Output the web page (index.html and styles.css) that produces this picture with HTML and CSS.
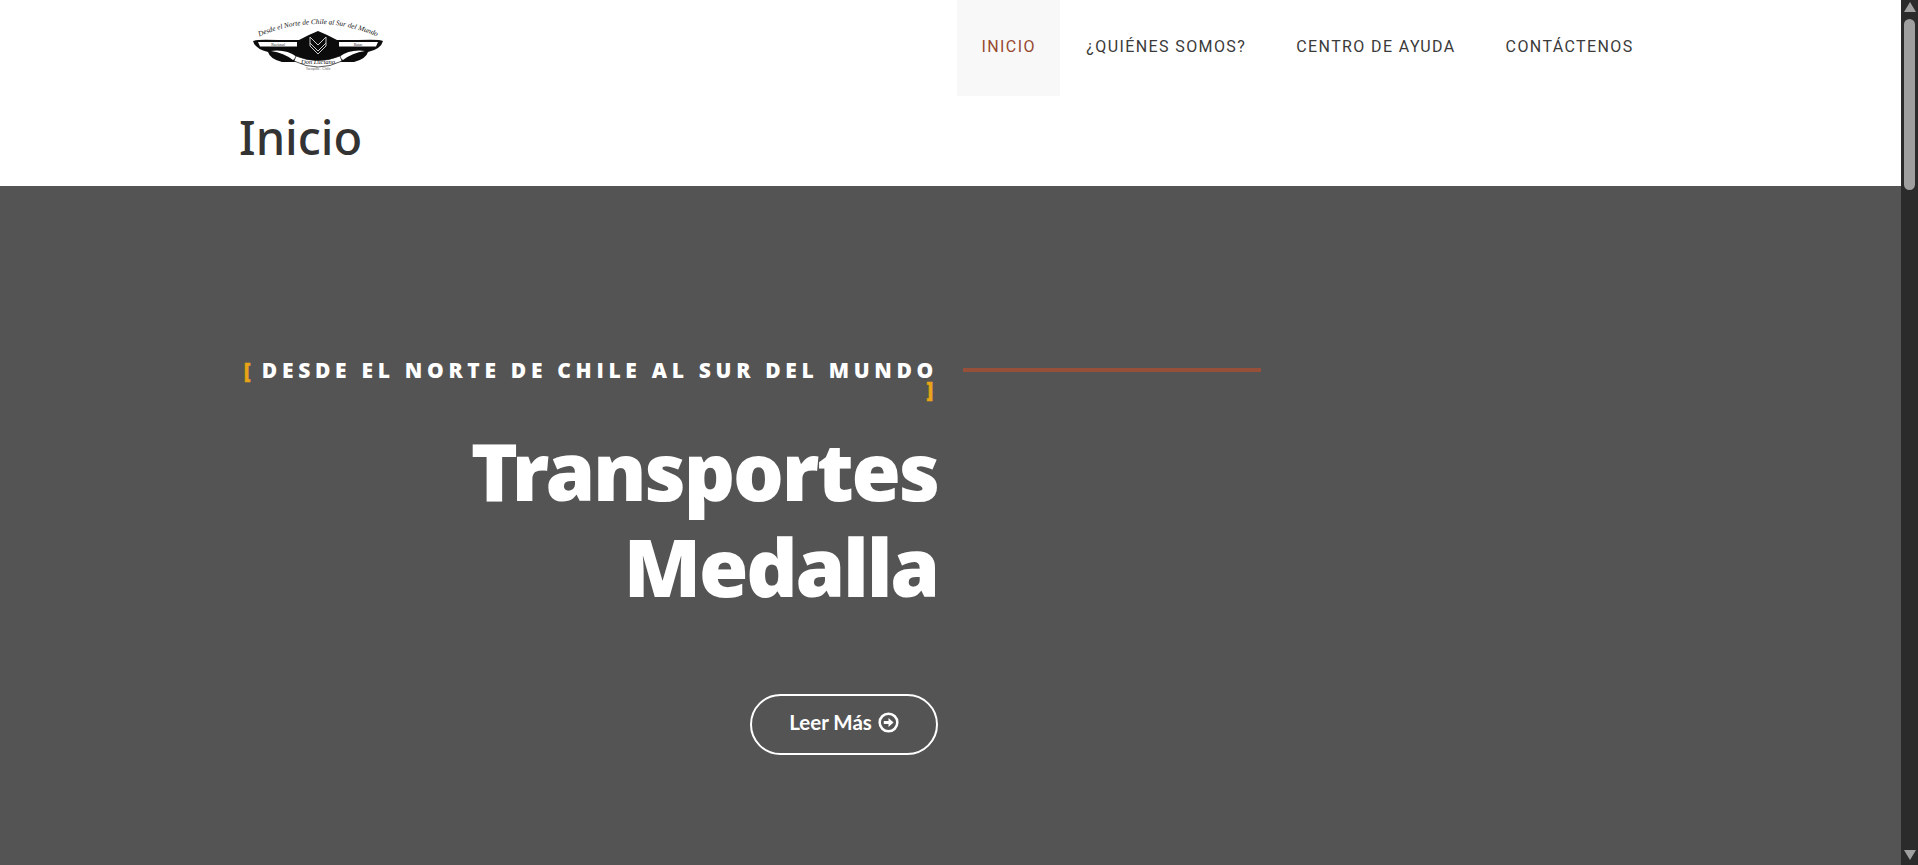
FILE: index.html
```html
<!DOCTYPE html>
<html lang="es">
<head>
<meta charset="utf-8">
<title>Inicio</title>
<link rel="stylesheet" href="styles.css">
</head>
<body>
<div class="page">
  <header class="header">
    <div class="topbar">
      <a class="logo" href="#" aria-label="Transportes Medalla">
        <svg width="136" height="60" viewBox="0 0 136 60">
          <defs><path id="arc" d="M8 22 Q68 -4 128 22"/></defs>
          <text class="logo-script"><textPath href="#arc" startOffset="50%" text-anchor="middle">Desde el Norte de Chile al Sur del Mundo</textPath></text>
          <path d="M3 26 Q6 24 28 25 L49 25 Q58 20 68 16 Q78 20 87 25 L108 25 Q130 24 133 26 Q131 34 118 37 Q116 44 104 47 L88 47 Q78 51 68 51 Q58 51 48 47 L32 47 Q20 44 18 37 Q5 34 3 26Z" fill="#0c0c0c"/>
          <path d="M8 27 H47 V31.5 H10Z M89 27 H128 L126 31.5 H89Z" fill="#fff"/>
          <path d="M21 36 Q36 34 47 42 L43 45 Q34 38 21 36Z M115 36 Q100 34 89 42 L93 45 Q102 38 115 36Z" fill="#fff"/>
          <path d="M46 41 Q68 50 90 41 L92 46 Q80 52 68 52 Q56 52 44 46Z" fill="#fff" stroke="#111" stroke-width=".7"/>
          <path d="M60 22 L68 30 L76 22 V31 L68 39 L60 31Z M60 28 L68 36 L76 28" fill="none" stroke="#ccc" stroke-width="1"/>
          <text class="logo-label" x="28" y="31" text-anchor="middle">Nacional</text>
          <text class="logo-label" x="108" y="31" text-anchor="middle">Rutas</text>
          <text class="logo-name" x="68" y="49" text-anchor="middle">Don Luciano</text>
          <text class="logo-small" x="68" y="55" text-anchor="middle">Tocopilla - Chile</text>
        </svg>
      </a>
      <nav class="nav">
        <a class="nav-item active" href="#">INICIO</a>
        <a class="nav-item" href="#">¿QUIÉNES SOMOS?</a>
        <a class="nav-item" href="#">CENTRO DE AYUDA</a>
        <a class="nav-item" href="#">CONTÁCTENOS</a>
      </nav>
    </div>
    <h2 class="page-title">Inicio</h2>
  </header>
  <main class="hero">
    <div class="hero-col">
      <p class="eyebrow"><span class="bracket bracket-open">[</span> DESDE EL NORTE DE CHILE AL SUR DEL MUNDO <span class="bracket">]</span></p>
      <h1 class="hero-title">Transportes Medalla</h1>
      <a class="btn" href="#">Leer Más
        <svg class="btn-icon" width="21" height="21" viewBox="0 0 20 20"><circle cx="10" cy="10" r="8.4" fill="none" stroke="#fff" stroke-width="2.4"/><path d="M5.5 8.6H10V5.6L14.8 10 10 14.4V11.4H5.5Z" fill="#fff"/></svg>
      </a>
    </div>
    <div class="hero-rule"></div>
  </main>
</div>
<aside class="scrollbar" aria-hidden="true">
  <span class="sb-up"></span>
  <span class="sb-thumb"></span>
  <span class="sb-down"></span>
</aside>
</body>
</html>
```
FILE: styles.css
```css
* { box-sizing: border-box; }
html, body { margin: 0; height: 865px; overflow: hidden; }
body { display: flex; font-family: "Noto Sans", sans-serif; background: #fff; }
a { text-decoration: none; color: inherit; }

.page { flex: 1; min-width: 0; display: flex; flex-direction: column; height: 865px; }

.header { height: 186px; background: #fff; padding-left: 238px; }
.topbar { display: flex; height: 96px; }
.logo { display: block; width: 719px; padding: 15px 0 0 12px; }
.logo svg { display: block; }
.logo-script { font: italic 7.2px "Liberation Serif", serif; fill: #111; }
.logo-label { font: italic 3.8px "Liberation Serif", serif; fill: #222; }
.logo-name { font: italic 6.5px "Liberation Serif", serif; fill: #111; }
.logo-small { font: 3.5px "Liberation Sans", sans-serif; fill: #666; }

.nav { display: flex; }
.nav-item {
  display: block;
  height: 96px;
  padding: 37px 25px 0;
  font: 400 16px/20px Roboto, sans-serif;
  letter-spacing: 1.4px;
  color: #3a3a3a;
}
.nav-item.active { background: #f8f8f8; color: #97482f; padding: 37px 24.5px 0; margin-right: 1px; }

.page-title {
  margin: 11px 0 0 1px;
  font: 500 47px/60px "Noto Sans", sans-serif;
  color: #333;
}

.hero { flex: 1; background: #545454; display: flex; align-items: flex-start; padding: 175px 0 0 238px; }
.hero-col { width: 700px; display: flex; flex-direction: column; align-items: flex-end; }
.eyebrow {
  margin: 0;
  text-align: right;
  font: 800 21px/19px "Open Sans", sans-serif;
  letter-spacing: 4.7px;
  color: #fff;
  width: 700px;
}
.bracket { color: #e8a317; -webkit-text-stroke: 0.4px #e8a317; }
.bracket-open { letter-spacing: 1px; }
.hero-title {
  margin: 23px 0 0;
  width: 600px;
  text-align: right;
  font: 900 80px/96px "Noto Sans", sans-serif;
  letter-spacing: -2.2px;
  color: #fff;
}
.btn {
  display: flex;
  align-items: center;
  justify-content: center;
  gap: 6px;
  margin-top: 80px;
  width: 188px;
  height: 61px;
  padding-bottom: 5px;
  border: 2px solid #fff;
  border-radius: 31px;
  font: 700 20.5px/24px Lato, sans-serif;
  color: #fff;
}
.hero-rule { width: 298px; height: 4px; margin: 7px 0 0 25px; background: #964f38; }

.scrollbar { width: 17px; height: 865px; background: #2b2b2b; display: flex; flex-direction: column; align-items: center; flex: none; }
.sb-up { margin-top: 2px; width: 0; height: 0; border-left: 6.5px solid transparent; border-right: 6.5px solid transparent; border-bottom: 10px solid #a0a0a0; }
.sb-thumb { margin-top: 7px; width: 11px; height: 171px; border-radius: 6px; background: #9f9f9f; }
.sb-down { margin-top: auto; margin-bottom: 5px; width: 0; height: 0; border-left: 6.5px solid transparent; border-right: 6.5px solid transparent; border-top: 10px solid #a0a0a0; }
```
